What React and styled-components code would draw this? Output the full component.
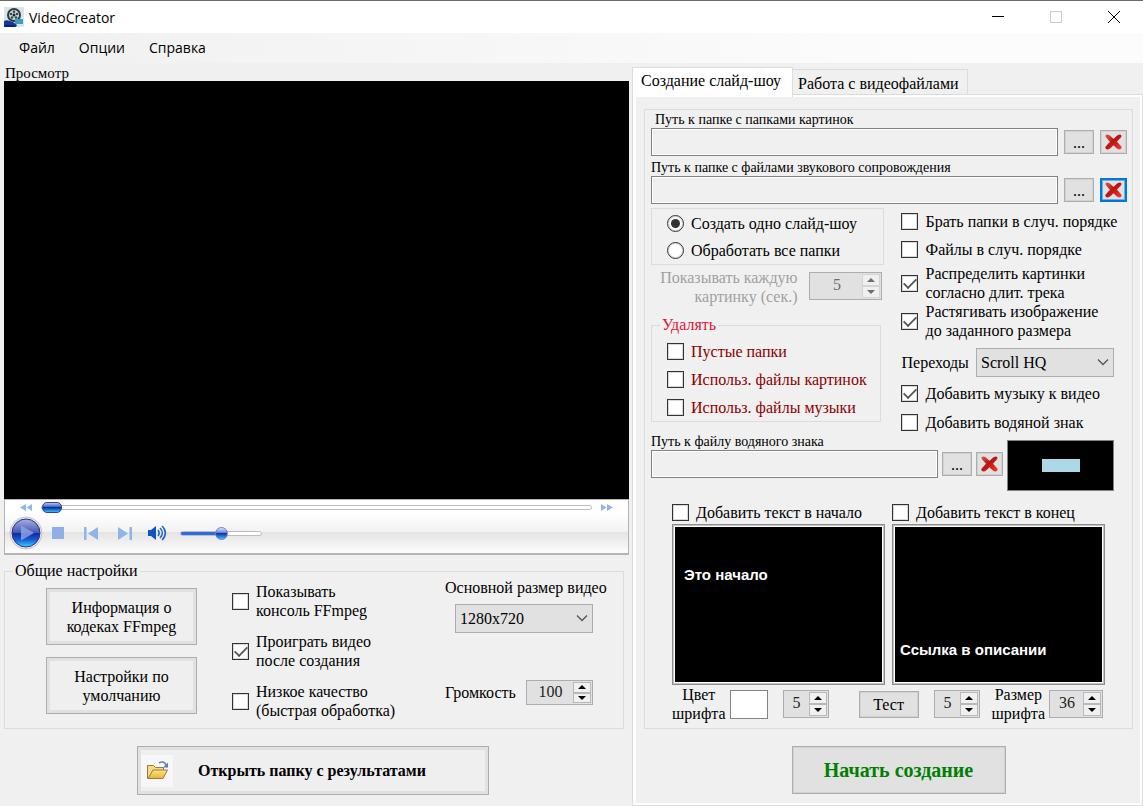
import React from 'react';
import styled, { createGlobalStyle, css } from 'styled-components';

const GlobalStyle = createGlobalStyle`
  * {
    box-sizing: border-box;
  }

  body {
    margin: 0;
    background: #f0f0f0;
  }

  body, button, input, select {
    color: #000;
    font-family: "Liberation Serif", "Times New Roman", serif;
    font-size: 16px;
    line-height: 19px;
  }

  button, input, select {
    margin: 0;
  }
`;

const Window = styled.div`
  display: flex;
  flex-direction: column;
  min-height: 100vh;
  border-top: 1px solid #6b6b6b;
`;

const TitleBar = styled.header`
  display: flex;
  align-items: center;
  height: 32px;
  padding-left: 4px;
  background: #fff;
`;

const Title = styled.h1`
  flex: 1;
  margin: 0 0 0 5px;
  font: 400 14px "Open Sans", sans-serif;
`;

const WindowButton = styled.button`
  display: flex;
  align-items: center;
  justify-content: center;
  width: 58px;
  height: 32px;
  padding: 0;
  border: 0;
  background: none;
`;

const MenuBar = styled.nav`
  display: flex;
  gap: 24px;
  height: 30px;
  padding: 0 19px 2px;
  align-items: center;
  background: linear-gradient(90deg, #f0f0f0, #fcfcfc 80%);
`;

const MenuItem = styled.button`
  padding: 0;
  border: 0;
  background: none;
  font: 400 14px "Open Sans", sans-serif;
`;

const Main = styled.main`
  flex: 1;
  display: grid;
  grid-template-columns: minmax(0, 632fr) minmax(0, 511fr);
`;

const LeftSide = styled.section`
  display: flex;
  flex-direction: column;
  padding: 2px 3px 11px 4px;
`;

const RightSide = styled.section`
  display: flex;
  flex-direction: column;
  padding-top: 4px;
`;

const Caption = styled.div`
  padding-left: 1px;
  font-size: 15px;
  line-height: 16px;
`;

const Video = styled.div`
  flex: 1;
  min-height: 240px;
  background: #000;
`;

const Player = styled.div`
  height: 56px;
  border: 1px solid #b4b4b4;
  border-width: 1px 1px 2px 1px;
  background: linear-gradient(#fff 0, #fff 25%, #f2f2f2 60%, #e4e4e4 61%, #fdfdfd 100%);
`;

const SeekRow = styled.div`
  display: flex;
  align-items: center;
  gap: 8px;
  height: 15px;
  padding: 0 14px 0 14px;
`;

const PlayRow = styled.div`
  display: flex;
  align-items: center;
  height: 36px;
  padding-left: 4px;
`;

const IconButton = styled.button`
  display: flex;
  align-items: center;
  justify-content: center;
  width: ${props => props.$width}px;
  padding: 0;
  border: 0;
  background: none;
`;

const SeekSlider = styled.input`
  flex: 1;
  min-width: 0;
  height: 12px;
  appearance: none;
  background: none;

  &::-webkit-slider-runnable-track {
    height: 5px;
    border: 1px solid #bdbdbd;
    border-radius: 3px;
    background: #fff;
  }

  &::-webkit-slider-thumb {
    appearance: none;
    width: 20px;
    height: 11px;
    margin-top: -4px;
    border: 1px solid #2c439b;
    border-radius: 5px;
    background: linear-gradient(#b6c4ee, #4468c4 40%, #0a2ba0 50%, #35c0f4);
  }
`;

const VolumeSlider = styled.input`
  width: 82px;
  height: 14px;
  margin-left: 6px;
  appearance: none;
  background: none;

  &::-webkit-slider-runnable-track {
    height: 5px;
    border: 1px solid #bdbdbd;
    border-radius: 3px;
    background: linear-gradient(90deg, #2b6de0 50%, #fff 50%);
  }

  &::-webkit-slider-thumb {
    appearance: none;
    width: 13px;
    height: 13px;
    margin-top: -5px;
    border: 1px solid #6d83c8;
    border-radius: 50%;
    background: linear-gradient(#dfe4f6, #6f8ad6 40%, #0d36a8 50%, #35c0f4);
  }
`;

const GroupBox = styled.fieldset`
  min-width: 0;
  margin: ${props => props.$margin || 0};
  padding: ${props => props.$padding || 0};
  border: 1px solid #dcdcdc;
`;

const Legend = styled.legend`
  margin-left: ${props => props.$indent}px;
  padding: 0 2px;
  color: ${props => props.$color || '#000'};
  line-height: 18px;
`;

const SettingsGrid = styled.div`
  display: grid;
  grid-template-columns: 151px 1fr 168px;
  column-gap: 35px;
`;

const Stack = styled.div`
  display: flex;
  flex-direction: column;
  gap: ${props => props.$gap || 0}px;
  padding-top: ${props => props.$top || 0}px;
`;

const PushButton = styled.button`
  display: flex;
  flex: none;
  align-items: center;
  justify-content: center;
  width: ${props => (props.$width ? `${props.$width}px` : 'auto')};
  height: ${props => props.$height}px;
  padding: 0;
  border: 1px solid #adadad;
  box-shadow: inset 0 0 0 1px #d2d2d2;
  background: #e1e1e1;
  ${props => props.$framed && css`
    background: #efefef;
    box-shadow: inset 0 0 0 3px #e1e1e1;
  `}
  ${props => props.$focused && css`
    border: 2px solid #0078d7;
    box-shadow: inset 0 0 0 1px #6caee6;
  `}
`;

const Bold = styled.span`
  flex: 1;
  padding-right: ${props => props.$pad || 0}px;
  color: ${props => props.$color || '#000'};
  font-size: ${props => props.$size || 16}px;
  font-weight: 700;
`;

const CheckLabel = styled.label`
  display: flex;
  align-items: center;
  gap: 7px;
  min-height: ${props => props.$height || 38}px;
  margin-top: ${props => props.$top || 0}px;
  color: ${props => props.$color || '#000'};
  white-space: nowrap;
`;

const CheckInput = styled.input`
  display: grid;
  place-items: center;
  flex: none;
  width: 17px;
  height: 17px;
  appearance: none;
  border: 1px solid #333;
  box-shadow: inset 0 0 0 1px #d8d8d8;
  background: #fff;

  &[type='radio'] {
    border-radius: 50%;
  }

  &[type='radio']:checked::before {
    content: '';
    width: 9px;
    height: 9px;
    border-radius: 50%;
    background: #333;
  }

  &[type='checkbox']:checked::before {
    content: '';
    width: 12px;
    height: 6px;
    margin-top: -3px;
    border: solid #555;
    border-width: 0 0 2px 2px;
    transform: rotate(-45deg) scale(0.9);
  }
`;

const FieldLabel = styled.label`
  line-height: ${props => props.$line || 19}px;
  white-space: nowrap;
  text-align: ${props => props.$align || 'left'};
  color: ${props => props.$color || '#000'};
`;

const SelectBox = styled.div`
  position: relative;
  width: 138px;
  margin: ${props => props.$margin || 0};

  svg {
    position: absolute;
    top: 10px;
    right: 5px;
    pointer-events: none;
  }
`;

const Select = styled.select`
  display: block;
  width: 100%;
  height: 29px;
  padding: 0 4px;
  appearance: none;
  border: 1px solid #adadad;
  border-radius: 0;
  background: #e1e1e1;
`;

const SpinBox = styled.div`
  display: flex;
  flex: none;
  width: ${props => props.$width}px;
  height: ${props => props.$height || 28}px;
  padding: 1px;
  border: 1px solid #abadb3;
  background: #e1e1e1;
`;

const SpinInput = styled.input`
  flex: 1;
  min-width: 0;
  padding: 0 0 3px;
  border: 0;
  background: none;
  text-align: center;
  color: #222;

  &:disabled {
    color: #6d6d6d;
  }
`;

const SpinArrows = styled.div`
  display: flex;
  flex-direction: column;
  width: 18px;

  button {
    flex: 1;
    display: flex;
    align-items: center;
    justify-content: center;
    padding: 0;
    border: 1px solid #b9b9b9;
    background: #f0f0f0;
  }

  button:disabled {
    border-color: #d4d4d4;
  }
`;

const Row = styled.div`
  display: flex;
  align-items: ${props => props.$align || 'center'};
  justify-content: ${props => props.$justify || 'flex-start'};
  gap: ${props => props.$gap || 0}px;
  margin: ${props => props.$margin || 0};
`;

const Tabs = styled.div`
  display: flex;
  align-items: flex-end;
  height: 27px;
`;

const Tab = styled.button`
  height: 25px;
  padding: 2px 8px 0 5px;
  border: 1px solid #dcdcdc;
  border-width: 1px 1px 0 0;
  background: #f0f0f0;
  white-space: nowrap;

  &[aria-selected='true'] {
    position: relative;
    height: 30px;
    margin-bottom: -3px;
    padding: 0 11px 4px 8px;
    border-width: 1px 1px 0 1px;
    background: #fff;
  }
`;

const TabPanel = styled.div`
  flex: 1;
  padding: 14px 9px 10px 11px;
  border: 1px solid #dcdcdc;
  box-shadow: inset 3px 2px #fff, inset -2px -2px #fff;
`;

const PathField = styled.div`
  flex: 1;
  display: grid;
  grid-template-columns: minmax(0, 1fr) 30px 27px;
  column-gap: ${props => props.$gap || 6}px;
  align-items: center;
  margin-bottom: ${props => props.$bottom || 0}px;
`;

const PathLabel = styled.label`
  grid-column: 1 / -1;
  padding-left: ${props => props.$indent || 0}px;
  font-size: 14px;
  line-height: 16px;
`;

const PathInput = styled.input`
  width: 100%;
  height: 28px;
  padding: 0 4px;
  border: 1px solid #828282;
  box-shadow: inset 0 0 0 1px #fff;
  background: #f0f0f0;
`;

const Options = styled.div`
  display: grid;
  grid-template-columns: minmax(0, 234fr) minmax(0, 226fr);
  column-gap: 17px;
`;

const WatermarkPreview = styled.div`
  display: grid;
  place-items: center;
  width: 107px;
  height: 51px;
  margin: 6px 13px 0 0;
  border: 1px solid #828282;
  background: #000;
`;

const WatermarkMark = styled.div`
  width: 38px;
  height: 13px;
  background: #add8e6;
`;

const TextColumns = styled.div`
  display: grid;
  grid-template-columns: minmax(0, 1fr) minmax(0, 1fr);
  column-gap: 7px;
  margin: 9px 22px 0 21px;
`;

const TextPreview = styled.div`
  display: flex;
  align-items: ${props => props.$align};
  height: 161px;
  padding: ${props => props.$padding};
  border: 1px solid #8c8c8c;
  outline: 1px solid #fff;
  outline-offset: -3px;
  background: #000;
  box-shadow: inset 0 0 0 1px #c4c4c4;
  color: #fff;
  font: 700 15px/19px "Liberation Sans", Arial, sans-serif;
`;

const Swatch = styled.input`
  width: 38px;
  height: 29px;
  padding: 0;
  appearance: none;
  border: 1px solid #828282;
  background: #fff;

  &::-webkit-color-swatch-wrapper {
    padding: 0;
  }

  &::-webkit-color-swatch {
    border: 0;
  }
`;

const AppIcon = () => (
  <svg width="20" height="20" viewBox="0 0 20 20">
    <rect width="20" height="20" fill="#d8e6ea" />
    <circle cx="10" cy="8" r="7" fill="#2d3b42" />
    <circle cx="10" cy="8" r="5" fill="#cfd8dc" />
    <circle cx="10" cy="8" r="1.5" fill="#222" />
    <g fill="#37474f">
      <circle cx="10" cy="4.800" r="1.300" />
      <circle cx="13" cy="7" r="1.300" />
      <circle cx="12" cy="10.500" r="1.300" />
      <circle cx="8" cy="10.500" r="1.300" />
      <circle cx="7" cy="7" r="1.300" />
    </g>
    <path d="M0 14c3-2 6 0 9 1l4 3-1 2H0z" fill="#123a9a" />
    <path d="M11 12h8v5h-8z" fill="#3aa0bd" />
    <path d="M0 18h10v2H0z" fill="#0b2270" />
  </svg>
);

const Chevron = () => (
  <svg width="12" height="9" viewBox="0 0 12 9" fill="none" stroke="#555" strokeWidth="1.300">
    <path d="M1 1.500l5 5 5-5" />
  </svg>
);

const RedCross = () => (
  <svg width="19" height="18" viewBox="0 0 19 18">
    <defs>
      <linearGradient id="cross" x1="0" y1="0" x2="1" y2="1">
        <stop offset="0" stopColor="#e0584e" />
        <stop offset="0.450" stopColor="#b81414" />
        <stop offset="1" stopColor="#fa3c36" />
      </linearGradient>
    </defs>
    <path
      d="M3.500 1.500c2 0 4 2.600 6 4.300 2-1.700 4-4.300 6-4.300 1.800 0 2.500 1.400 1.600 2.800L13 8.800l4.300 4.600c1 1.500-.4 3.200-2.200 3.100-2 0-3.600-2.600-5.600-4.300-2 1.700-3.600 4.300-5.600 4.300-1.800 0-3.200-1.600-2.200-3.100L6 8.800 1.900 4.300C1 2.900 1.700 1.500 3.500 1.500z"
      fill="url(#cross)"
    />
  </svg>
);

const FolderIcon = () => (
  <svg width="32" height="32" viewBox="0 0 32 32">
    <defs>
      <linearGradient id="folder" x1="0" y1="0" x2="0" y2="1">
        <stop offset="0" stopColor="#fde58a" />
        <stop offset="1" stopColor="#f0b030" />
      </linearGradient>
    </defs>
    <rect width="32" height="32" fill="#f7f7f9" />
    <path d="M6.500 23.500v-13h6l2 2h8v3" fill="#f7dc85" stroke="#9a7c38" />
    <path d="M7 23.500l5-8.500h14.500l-4.500 8.500z" fill="url(#folder)" stroke="#9a7c38" />
    <path d="M18 8c3-2 6-1 7 2" fill="none" stroke="#6c86ae" strokeWidth="1.600" />
    <path d="M27 7.500v5h-5z" fill="#5b7fae" />
  </svg>
);

const PlayIcon = () => (
  <svg width="34" height="34" viewBox="0 0 34 34">
    <defs>
      <linearGradient id="play" x1="0" y1="0" x2="0" y2="1">
        <stop offset="0" stopColor="#a9b2e0" />
        <stop offset="0.480" stopColor="#4656b8" />
        <stop offset="0.520" stopColor="#1228a0" />
        <stop offset="0.750" stopColor="#1560d8" />
        <stop offset="1" stopColor="#3fd6ff" />
      </linearGradient>
    </defs>
    <circle cx="17" cy="17" r="16" fill="#e6e6ea" stroke="#c4c4c8" />
    <circle cx="17" cy="17" r="14" fill="url(#play)" stroke="#24318a" />
    <path d="M12 9.500l13 7.500-13 7.500z" fill="#8ea6e6" opacity="0.800" />
  </svg>
);

const SpeakerIcon = () => (
  <svg width="20" height="16" viewBox="0 0 20 16" fill="none" stroke="#1f66c8" strokeWidth="1.600">
    <path d="M1 5h3l5-4v14l-5-4H1z" fill="#0f55c0" stroke="none" />
    <path d="M11 5c1.500 2 1.500 4 0 6M13 3c3 3 3 7 0 10M15 1c4.500 4 4.500 10 0 14" />
  </svg>
);

const Arrow = ({ down, disabled }) => (
  <svg width="8" height="4" viewBox="0 0 8 4">
    <path d={down ? 'M0 0h8L4 4z' : 'M0 4h8L4 0z'} fill={disabled ? '#6d6d6d' : '#000'} />
  </svg>
);

const Check = ({ children, type = 'checkbox', checked, name, ...rest }) => (
  <CheckLabel {...rest}>
    <CheckInput type={type} name={name} defaultChecked={checked} />
    <span>{children}</span>
  </CheckLabel>
);

const Spinner = ({ id, label, value, width, height, disabled }) => (
  <SpinBox $width={width} $height={height}>
    <SpinInput id={id} aria-label={label} defaultValue={value} inputMode="numeric" disabled={disabled} />
    <SpinArrows>
      <button type="button" aria-label="Больше" disabled={disabled}><Arrow disabled={disabled} /></button>
      <button type="button" aria-label="Меньше" disabled={disabled}><Arrow down disabled={disabled} /></button>
    </SpinArrows>
  </SpinBox>
);

const Path = ({ id, label, indent, gap, bottom, focused }) => (
  <PathField $gap={gap} $bottom={bottom}>
    <PathLabel htmlFor={id} $indent={indent}>{label}</PathLabel>
    <PathInput id={id} readOnly />
    <PushButton $height={24} aria-label="Обзор">...</PushButton>
    <PushButton $height={24} $focused={focused} aria-label="Очистить"><RedCross /></PushButton>
  </PathField>
);

const PlayerControls = () => (
  <Player>
    <SeekRow>
      <IconButton $width={14} aria-label="Назад">
        <svg width="12" height="7" viewBox="0 0 12 7"><path d="M6 0v7L0 3.500zM12 0v7L6.500 3.500z" fill="#8fb6ea" /></svg>
      </IconButton>
      <SeekSlider type="range" aria-label="Позиция" defaultValue="0" />
      <IconButton $width={14} aria-label="Вперёд">
        <svg width="12" height="7" viewBox="0 0 12 7"><path d="M0 0v7l5.500-3.500zM6 0v7l6-3.500z" fill="#8fb6ea" /></svg>
      </IconButton>
    </SeekRow>
    <PlayRow>
      <IconButton $width={34} aria-label="Воспроизвести"><PlayIcon /></IconButton>
      <IconButton $width={30} aria-label="Стоп">
        <svg width="12" height="12"><rect width="12" height="12" fill="#8fb0e6" /></svg>
      </IconButton>
      <IconButton $width={36} aria-label="В начало">
        <svg width="14" height="13" viewBox="0 0 14 13"><path d="M0 0h2.500v13H0zM14 0v13L4 6.500z" fill="#8fb4ea" /></svg>
      </IconButton>
      <IconButton $width={31} aria-label="В конец">
        <svg width="14" height="13" viewBox="0 0 14 13"><path d="M11.500 0H14v13h-2.500zM0 0v13l10-6.500z" fill="#8fb4ea" /></svg>
      </IconButton>
      <IconButton $width={34} aria-label="Звук"><SpeakerIcon /></IconButton>
      <VolumeSlider type="range" aria-label="Громкость плеера" defaultValue="50" />
    </PlayRow>
  </Player>
);

const GeneralSettings = () => (
  <GroupBox $margin="7px 5px 17px 0" $padding="0 10px 8px 41px">
    <Legend $indent={-33}>Общие настройки</Legend>
    <SettingsGrid>
      <Stack $gap={12} $top={8}>
        <PushButton $height={57} $framed>Информация о<br />кодеках FFmpeg</PushButton>
        <PushButton $height={57} $framed>Настройки по<br />умолчанию</PushButton>
      </Stack>
      <Stack $gap={12} $top={2}>
        <Check>Показывать<br />консоль FFmpeg</Check>
        <Check checked>Проиграть видео<br />после создания</Check>
        <Check>Низкое качество<br />(быстрая обработка)</Check>
      </Stack>
      <Stack>
        <FieldLabel htmlFor="size" $line={16}>Основной размер видео</FieldLabel>
        <SelectBox $margin="8px 0 47px 10px">
          <Select id="size"><option>1280x720</option></Select>
          <Chevron />
        </SelectBox>
        <Row $justify="space-between" $margin="0 20px 0 0">
          <FieldLabel htmlFor="volume">Громкость</FieldLabel>
          <Spinner id="volume" value="100" width={67} height={25} />
        </Row>
      </Stack>
    </SettingsGrid>
  </GroupBox>
);

const SlideshowOptions = () => (
  <Options>
    <Stack>
      <GroupBox $margin="1px 0 3px" $padding="1px 0 0 15px">
        <Check type="radio" name="mode" checked $height={27}>Создать одно слайд-шоу</Check>
        <Check type="radio" name="mode" $height={27}>Обработать все папки</Check>
      </GroupBox>
      <Row $align="flex-start" $justify="flex-end" $gap={12} $margin="0 2px 0 0">
        <FieldLabel htmlFor="delay" $align="right" $color="#a0a0a0">Показывать каждую<br />картинку (сек.)</FieldLabel>
        <Row $margin="4px 0 0">
          <Spinner id="delay" value="5" width={73} disabled />
        </Row>
      </Row>
      <GroupBox $margin="10px 3px 0 0" $padding="3px 0 0 15px">
        <Legend $indent={-7} $color="#dc143c">Удалять</Legend>
        <Check $height={28} $color="#8b0000">Пустые папки</Check>
        <Check $height={28} $color="#8b0000">Использ. файлы картинок</Check>
        <Check $height={28} $color="#8b0000">Использ. файлы музыки</Check>
      </GroupBox>
    </Stack>
    <Stack>
      <Check $height={28}>Брать папки в случ. порядке</Check>
      <Check $height={28}>Файлы в случ. порядке</Check>
      <Check checked $top={1}>Распределить картинки<br />согласно длит. трека</Check>
      <Check checked>Растягивать изображение<br />до заданного размера</Check>
      <Row $justify="space-between" $margin="8px 13px 0 0">
        <FieldLabel htmlFor="transition">Переходы</FieldLabel>
        <SelectBox>
          <Select id="transition"><option>Scroll HQ</option></Select>
          <Chevron />
        </SelectBox>
      </Row>
      <Check checked $height={24} $top={4}>Добавить музыку к видео</Check>
      <Check $height={24} $top={5}>Добавить водяной знак</Check>
    </Stack>
  </Options>
);

const TextSettings = () => (
  <>
    <TextColumns>
      <Check $height={24}>Добавить текст в начало</Check>
      <Check $height={24}>Добавить текст в конец</Check>
      <TextPreview $align="flex-start" $padding="40px 11px 0">Это начало</TextPreview>
      <TextPreview $align="flex-end" $padding="0 7px 25px">Ссылка в описании</TextPreview>
    </TextColumns>
    <Row $gap={15} $margin="0 22px 0 21px">
      <Row $gap={4}>
        <FieldLabel htmlFor="color" $align="center">Цвет<br />шрифта</FieldLabel>
        <Swatch id="color" type="color" defaultValue="#ffffff" />
      </Row>
      <Row $margin="0 15px 0 0">
        <Spinner label="Длительность начала" value="5" width={46} />
      </Row>
      <PushButton $width={60} $height={27}>Тест</PushButton>
      <Row $gap={12}>
        <Spinner label="Длительность конца" value="5" width={46} />
        <Row $gap={4}>
          <FieldLabel htmlFor="fontsize" $align="center">Размер<br />шрифта</FieldLabel>
          <Spinner id="fontsize" value="36" width={54} />
        </Row>
      </Row>
    </Row>
  </>
);

const App = () => (
  <Window>
    <GlobalStyle />
    <TitleBar>
      <AppIcon />
      <Title>VideoCreator</Title>
      <WindowButton aria-label="Свернуть">
        <svg width="12" height="12" stroke="#000"><path d="M0 5.500h12" /></svg>
      </WindowButton>
      <WindowButton aria-label="Развернуть" disabled>
        <svg width="12" height="12" fill="none" stroke="#ccc"><rect x="0.500" y="0.500" width="11" height="11" /></svg>
      </WindowButton>
      <WindowButton aria-label="Закрыть">
        <svg width="12" height="12" stroke="#000"><path d="M0 0l12 12M12 0L0 12" /></svg>
      </WindowButton>
    </TitleBar>
    <MenuBar>
      <MenuItem>Файл</MenuItem>
      <MenuItem>Опции</MenuItem>
      <MenuItem>Справка</MenuItem>
    </MenuBar>
    <Main>
      <LeftSide>
        <Caption>Просмотр</Caption>
        <Video />
        <PlayerControls />
        <GeneralSettings />
        <Row $justify="center" $margin="0 8px 0 0">
          <PushButton $width={352} $height={49} $framed>
            <Row $margin="0 0 0 3px"><FolderIcon /></Row>
            <Bold $pad={36}>Открыть папку с результатами</Bold>
          </PushButton>
        </Row>
      </LeftSide>
      <RightSide>
        <Tabs role="tablist">
          <Tab role="tab" aria-selected="true">Создание слайд-шоу</Tab>
          <Tab role="tab" aria-selected="false">Работа с видеофайлами</Tab>
        </Tabs>
        <TabPanel role="tabpanel">
          <GroupBox $margin="0 0 17px" $padding="2px 5px 5px 6px">
            <Path id="images" label="Путь к папке с папками картинок" indent={4} bottom={4} />
            <Path id="sounds" label="Путь к папке с файлами звукового сопровождения" bottom={3} focused />
            <SlideshowOptions />
            <Row $align="flex-start" $gap={4}>
              <Path id="watermark" label="Путь к файлу водяного знака" gap={4} />
              <WatermarkPreview><WatermarkMark /></WatermarkPreview>
            </Row>
            <TextSettings />
          </GroupBox>
          <Row $justify="center" $margin="0 0 0 20px">
            <PushButton $width={214} $height={48}>
              <Bold $color="#008000" $size={20}>Начать создание</Bold>
            </PushButton>
          </Row>
        </TabPanel>
      </RightSide>
    </Main>
  </Window>
);

export default App;
